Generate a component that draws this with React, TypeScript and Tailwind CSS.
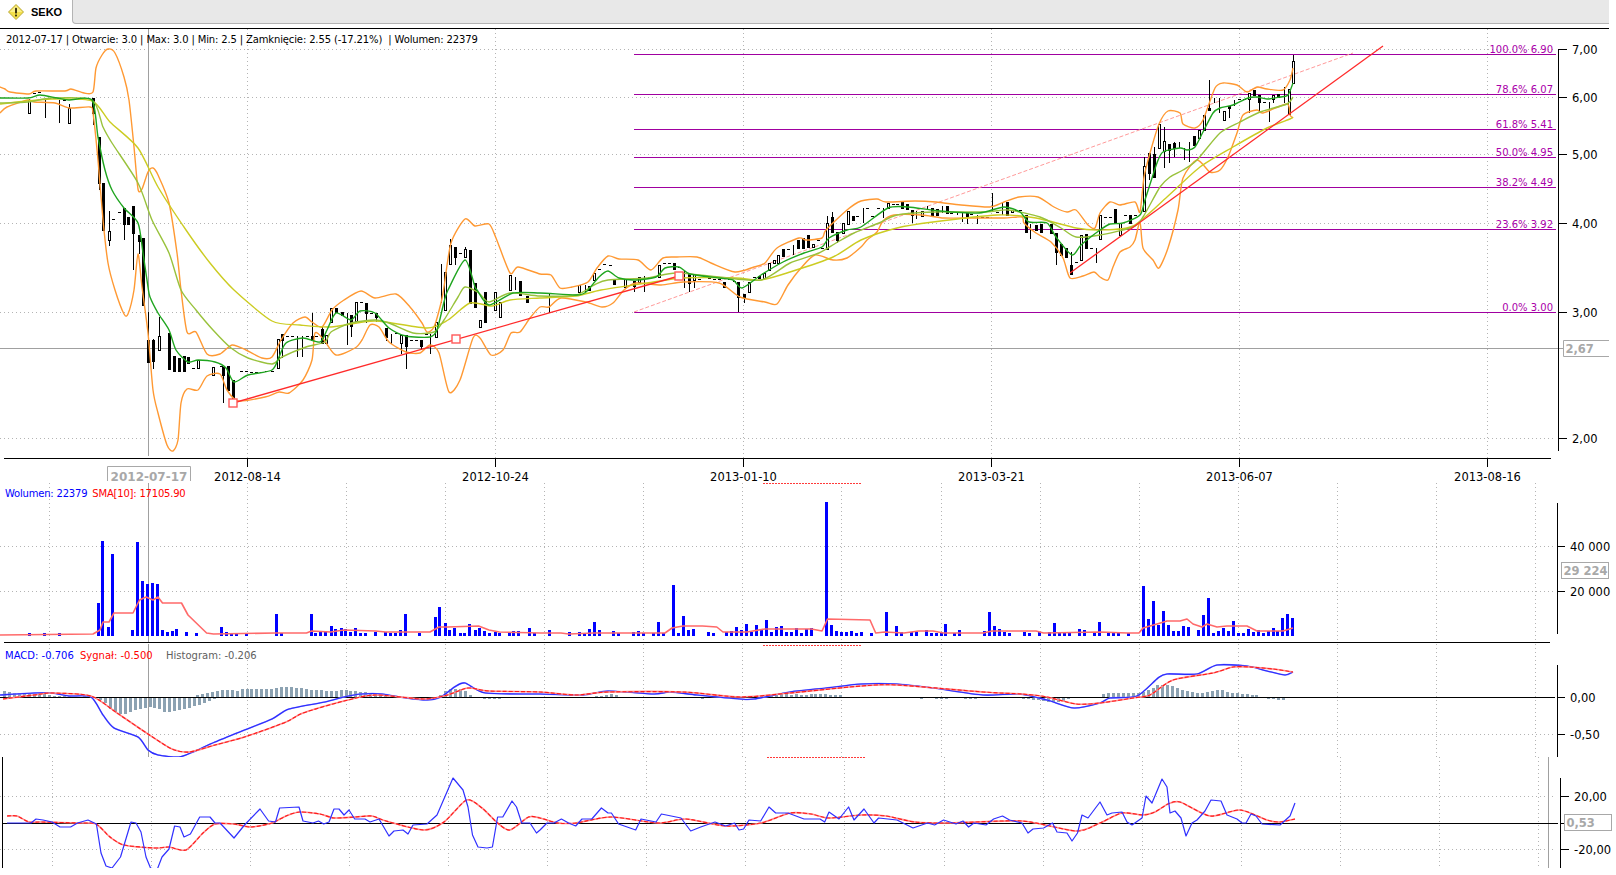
const upperBand = "0,87 5,89 10,92 29,94 36,91 65,91 71,89 84,93 93,92 96,68 102,55 108,49 115,53 124,77 129,100 134,147 138,189 142,189 148,172 153,168 158,175 169,203 177,253 181,290 187,332 196,332 207,354 220,354 232,345 246,350 262,358 272,357 281,340 293,323 305,317 312,322 322,327 332,310 344,300 361,291 375,298 396,294 410,307 422,323 427,332 434,327 441,303 444,287 451,243 465,219 475,226 489,224 496,238 510,273 518,267 540,274 551,275 560,288 572,287 588,282 597,268 608,256 619,259 638,260 651,270 663,258 677,257 697,257 711,263 735,272 754,267 765,263 777,248 799,238 806,240 822,238 826,230 847,210 861,201 877,199 886,202 915,201 936,202 961,205 990,207 1004,202 1019,197 1038,197 1054,207 1067,212 1076,210 1088,225 1095,228 1100,213 1110,202 1120,205 1135,202 1140,212 1144,177 1150,153 1159,124 1168,111 1180,113 1183,124 1195,128 1203,120 1215,88 1223,83 1237,85 1247,92 1257,87 1267,89 1283,90 1290,80 1293,68";
const lowerBand = "0,113 7,107 28,100 34,102 55,103 69,108 90,107 93,113 98,160 103,220 108,263 115,290 124,314 128,314 134,290 138,254 142,287 148,333 153,390 158,413 167,445 173,451 178,440 181,403 187,389 198,390 207,376 220,374 227,390 238,401 265,397 279,392 289,393 303,380 312,360 315,333 324,340 336,355 355,348 362,340 370,325 379,327 389,342 406,352 420,353 430,345 439,353 449,392 460,380 473,338 480,338 491,355 503,350 511,333 520,332 530,318 540,307 549,307 561,298 586,302 602,307 613,303 624,290 636,283 661,285 683,282 719,283 740,297 765,302 777,304 788,285 801,268 815,255 833,260 847,258 861,247 867,240 877,232 883,221 894,215 922,215 944,218 976,218 1004,218 1022,217 1024,223 1036,233 1051,242 1063,258 1070,278 1083,276 1094,272 1100,277 1108,280 1113,267 1120,252 1130,247 1135,240 1140,222 1143,248 1153,260 1159,268 1168,248 1178,210 1183,178 1197,160 1210,172 1220,170 1228,157 1237,133 1243,115 1257,110 1263,113 1287,104 1290,115 1293,118";
const fastMa = "0,98 28,98 40,95 57,98 69,100 92,100 98,137 105,170 112,190 124,208 138,223 143,253 148,287 150,297 158,313 169,330 176,350 188,362 198,360 215,362 226,368 234,382 248,375 272,370 279,357 286,343 303,338 320,342 327,330 336,313 351,320 360,311 375,313 389,328 406,336 430,337 437,330 444,302 448,290 465,260 475,287 477,290 489,305 513,293 540,293 576,295 586,292 599,277 608,271 619,278 636,280 656,277 665,268 679,267 690,274 719,278 733,280 742,288 761,275 783,262 804,253 822,247 829,238 847,230 861,227 888,208 908,207 940,211 979,213 1004,207 1020,212 1029,222 1047,223 1056,237 1072,255 1081,245 1100,230 1110,224 1123,223 1140,215 1145,200 1157,163 1163,152 1180,148 1187,150 1195,147 1203,132 1213,113 1220,108 1233,105 1248,98 1257,97 1267,99 1280,97 1288,95 1293,83";
const midMa = "0,103 28,102 52,98 92,100 103,127 112,143 138,183 152,220 169,253 181,290 196,310 213,330 231,348 248,358 272,364 282,357 306,347 325,342 331,332 351,323 375,320 389,323 413,333 434,332 444,320 458,297 465,287 479,293 489,302 510,293 540,296 576,295 594,285 608,280 647,278 676,273 719,277 761,280 790,263 819,253 836,243 854,233 879,223 897,215 933,212 986,212 1008,210 1040,217 1061,228 1076,237 1100,235 1133,227 1143,217 1160,187 1170,177 1183,170 1197,160 1220,133 1240,122 1260,112 1287,104 1293,97";
const slowMa = "0,104 17,102 52,99 92,101 110,122 138,148 158,187 186,230 210,263 234,290 272,321 300,325 331,327 375,321 427,328 448,320 470,303 492,306 510,300 540,298 576,296 601,290 647,283 683,278 736,278 761,280 790,272 833,257 861,240 897,228 933,222 997,215 1036,218 1076,228 1100,230 1133,226 1167,197 1200,167 1233,147 1267,128 1290,119 1293,117";

// x, top, bottom, filled (1) or hollow (0)
const bodies: [number, number, number, number][] = [
  [29, 100, 113, 0], [68.5, 108, 123, 0], [93, 98, 113, 1], [98.5, 137, 183, 1], [103, 183, 230, 1], [108.5, 231, 240, 0],
  [123.5, 208, 224, 1], [128, 217, 224, 1], [133, 206, 233, 1], [138.5, 235, 241, 1], [143, 238, 305, 1], [148, 340, 362, 1],
  [153, 340, 361, 1], [158.5, 336, 350, 0], [168.5, 333, 369, 1], [174, 356, 371, 1], [179, 358, 371, 1], [183.5, 356, 371, 1],
  [188, 357, 363, 1], [197.5, 360, 368, 0], [212.5, 367, 375, 0], [222.5, 367, 375, 1], [228, 366, 390, 1], [233, 380, 399, 1],
  [277.5, 339, 368, 0], [282, 334, 340, 1], [311.5, 336, 340, 1], [321.5, 329, 343, 1], [326, 335, 343, 0], [331, 308, 322, 0],
  [336, 308, 312, 1], [341.5, 312, 315, 1], [351, 315, 326, 1], [356, 302, 321, 0], [366, 303, 313, 1], [376, 313, 317, 1],
  [386, 328, 337, 1], [400.5, 335, 343, 0], [406, 335, 346, 1], [421, 340, 346, 1], [435.5, 322, 337, 0], [445, 272, 310, 0],
  [450, 245, 264, 0], [455, 247, 257, 1], [465, 249, 257, 0], [470, 250, 303, 1], [475, 283, 307, 1], [480, 320, 327, 0],
  [485, 292, 322, 1], [495, 292, 310, 0], [500, 302, 317, 0], [510, 275, 290, 0], [520, 281, 295, 1], [527, 296, 302, 1],
  [579, 285, 292, 0], [589, 286, 290, 1], [594, 273, 280, 0], [614, 280, 284, 1], [625, 279, 287, 0], [634, 281, 286, 1],
  [639, 277, 282, 0], [659, 265, 277, 0], [674, 263, 269, 1], [689, 274, 283, 1], [694, 274, 280, 0], [724, 282, 287, 1],
  [738, 282, 297, 1], [743.5, 294, 297, 1], [749, 282, 292, 0], [759, 276, 278, 1], [763.5, 273, 278, 0], [768.5, 263, 270, 0],
  [773.5, 260, 263, 0], [778, 255, 263, 0], [783, 249, 256, 1], [798, 240, 248, 1], [802.5, 238, 248, 1], [808, 235, 247, 1],
  [813, 244, 247, 0], [827, 223, 249, 0], [832, 217, 232, 1], [837, 232, 240, 1], [842.5, 223, 233, 0], [847.5, 211, 224, 0],
  [852.5, 216, 220, 1], [887.5, 203, 208, 0], [902, 202, 208, 1], [907, 204, 209, 1], [911.5, 210, 215, 1], [921.5, 211, 216, 0],
  [931.5, 208, 215, 1], [936.5, 209, 215, 1], [946.5, 206, 213, 1], [966.5, 213, 216, 1], [1006.5, 202, 215, 1], [1011.5, 210, 212, 0],
  [1025.7, 215, 232, 1], [1036, 225, 230, 1], [1041, 224, 232, 1], [1051, 224, 233, 1], [1055.5, 233, 252, 1], [1060.5, 244, 255, 1],
  [1065.5, 248, 257, 1], [1070.7, 265, 274, 1], [1080.7, 235, 260, 0], [1085.7, 234, 248, 1], [1100, 215, 239, 0], [1115, 209, 223, 1],
  [1120, 223, 235, 0], [1130, 215, 223, 1], [1144, 166, 211, 0], [1149, 153, 173, 1], [1154, 154, 177, 1], [1159, 124, 148, 0],
  [1164, 141, 151, 0], [1169, 144, 150, 1], [1174, 143, 148, 1], [1194, 136, 145, 1], [1199, 130, 138, 0], [1204, 115, 130, 0],
  [1209, 108, 110, 1], [1224, 111, 120, 0], [1229, 106, 108, 1], [1249, 93, 99, 0], [1254, 90, 95, 1], [1259, 95, 102, 1],
  [1273, 95, 99, 0], [1278, 94, 97, 1], [1289, 89, 114, 0], [1293, 61, 83, 0],
];
const wicks: [number, number, number][] = [
  [29, 99, 113], [44.5, 98, 118], [59, 100, 123], [68.5, 104, 123], [93, 98, 125], [98.5, 137, 190], [103, 183, 230], [108.5, 211, 246],
  [123.5, 208, 240], [133, 206, 270], [138.5, 235, 254], [148, 312, 363], [153, 339, 369], [158.5, 317, 350], [222.5, 367, 403],
  [282, 334, 358], [297, 336, 357], [302, 336, 357], [311.5, 313, 340], [321.5, 327, 343], [346.5, 313, 345], [351, 315, 337],
  [366, 303, 323], [376, 313, 322], [386, 328, 341], [391, 334, 344], [400.5, 335, 354], [406, 335, 369], [421, 340, 350], [430, 334, 354],
  [441, 264, 303], [450, 239, 264], [455, 247, 265], [465, 247, 257], [515, 277, 290], [549, 293, 313], [585, 285, 292], [634, 281, 292],
  [644, 276, 292], [684, 270, 288], [689, 274, 292], [694, 274, 288], [738, 282, 312], [743.5, 294, 303], [793, 245, 255], [827, 216, 249],
  [832, 212, 232], [837, 232, 243], [847.5, 211, 224], [862.5, 208, 223], [882.5, 208, 218], [911.5, 210, 223], [916, 211, 219],
  [926.5, 206, 210], [941.5, 206, 213], [956.5, 212, 215], [961.5, 212, 222], [966.5, 213, 224], [976.5, 215, 224], [991.5, 193, 212],
  [1001.5, 202, 215], [1030, 224, 239], [1041, 224, 232], [1055.5, 233, 265], [1070.7, 252, 274], [1095.7, 248, 263], [1144, 157, 211],
  [1149, 153, 180], [1154, 147, 177], [1164, 127, 168], [1169, 144, 163], [1174, 142, 157], [1179, 142, 148], [1184, 148, 160],
  [1189, 142, 162], [1209, 80, 110], [1214, 98, 103], [1219, 98, 113], [1229, 106, 118], [1234, 100, 106], [1249, 93, 113], [1254, 90, 95],
  [1259, 95, 113], [1269, 102, 122], [1273, 95, 103], [1284, 87, 103], [1289, 89, 115], [1293, 55, 83],
];
const dashes: [number, number][] = [
  [34, 93], [39, 92], [49, 98], [54, 98], [64, 100], [74, 99], [79, 98], [84, 99], [113, 219], [118.5, 212], [193, 368], [205, 360], [221, 366],
  [241, 371], [246, 371], [251, 372], [256, 372], [261, 372], [266, 371], [272, 371], [287, 336], [292, 336], [307, 336], [316, 336], [361, 302], [371, 313],
  [396, 333], [411, 340], [416, 340], [426, 334], [460, 253], [599, 269], [604, 264], [610, 265], [619, 279], [629, 279], [649, 277], [654, 277],
  [664, 263], [669, 263], [679, 267], [699, 279], [704, 277], [709, 278], [714, 279], [719, 279], [729, 279], [734, 281], [754, 277], [788, 249],
  [818, 240], [822, 248], [857, 216], [867, 208], [872, 216], [877.5, 208], [892.5, 204], [897, 204], [951, 213], [971, 214], [981.5, 217], [986.5, 217],
  [996.5, 212], [1016, 210], [1020, 210], [1076, 262], [1090.7, 248], [1105, 217], [1110, 217], [1125, 215], [1135, 215], [1239, 99], [1244, 99], [1264, 102],
];

// x, top of bar
const volume: [number, number][] = [
  [28.6, 633], [44, 633], [58.5, 633], [97.5, 603], [102, 541], [107.5, 627], [112, 554], [132, 630], [137.4, 542], [142, 581], [147.4, 584], [152, 583], [157, 584],
  [162, 630], [167, 632], [171.5, 631], [176.3, 629], [186, 632], [196, 633], [221.4, 627], [226, 632], [231, 633], [236, 633], [246, 633], [276, 614], [281, 633],
  [310.6, 614], [315.4, 633], [320, 632], [325.4, 632], [330.6, 626], [335.4, 629], [340.6, 628], [345.4, 629], [350, 632], [355.4, 628], [360, 633], [365, 633],
  [375.4, 632], [385, 632], [390, 633], [395, 633], [399.5, 630], [404.6, 614], [419.4, 633], [434.6, 617], [439.4, 607], [444.6, 623], [449.4, 630], [454, 628],
  [459.7, 633], [464, 633], [469.4, 624], [474.5, 630], [479.3, 628], [484, 631], [489.3, 633], [494.5, 632], [499.3, 633], [508.6, 632], [513.4, 631], [518.3, 631],
  [528.6, 628], [533.8, 633], [548.6, 630], [568.6, 632], [578.6, 632], [583.6, 633], [588.6, 629], [593.6, 622], [598.6, 630], [612.5, 631], [617.5, 633], [632.5, 632],
  [637.5, 631], [642.5, 633], [652.5, 633], [657.5, 622], [662.5, 633], [672.5, 585], [677.5, 633], [682.5, 616], [687.5, 630], [692.5, 629], [707.5, 632], [712.5, 633],
  [726.4, 632], [731.4, 631], [736.4, 627], [741.4, 630], [746.4, 624], [751.4, 632], [756.4, 625], [761.4, 630], [766.4, 620], [771.4, 632], [776.4, 627], [781.4, 626],
  [786.4, 632], [791.4, 632], [796.4, 628], [801.4, 633], [806.4, 629], [811.4, 628], [826.4, 502], [831.4, 625], [836, 631], [841, 632], [846, 632], [850.7, 631],
  [855.7, 633], [860.7, 632], [870.7, 633], [885.7, 612], [895.7, 626], [900.7, 632], [910.7, 632], [915.7, 632], [925.7, 630], [930.7, 633], [935.7, 633], [940.7, 633],
  [944.6, 624], [954.3, 633], [959.3, 630], [984.3, 631], [989.3, 612], [994.3, 626], [999.3, 629], [1004.3, 632], [1009.3, 633], [1024.3, 632], [1029.3, 633], [1039.3, 632],
  [1049.3, 632], [1053.6, 623], [1058.6, 632], [1063.6, 633], [1068.6, 632], [1078.6, 629], [1083.6, 630], [1093.6, 633], [1098.6, 622], [1108, 633], [1113, 633], [1118, 633],
  [1128, 633], [1143, 586], [1148, 619], [1153, 601], [1158, 625], [1163, 611], [1168, 625], [1173, 631], [1178, 631], [1183, 626], [1188, 627], [1198, 630], [1203, 615],
  [1208, 598], [1213, 633], [1218, 631], [1223, 628], [1228, 631], [1233, 621], [1238, 633], [1243, 633], [1248, 629], [1253, 632], [1258, 630], [1263, 633], [1268, 631],
  [1273, 628], [1277, 631], [1282, 618], [1287, 614], [1292, 618],
];
const sma = "0,635 93,634 100,630 103,622 109,622 114,613 133,613 139.5,600 146,597 153,600 158,597 162.5,603 181.5,603 188,615 206.6,633 213.5,634 275.5,633 306.5,633 311.6,631 330.6,632 344,630 375.4,631 385.7,632 430,632 439,627 447.7,627 478.6,626 489,630 499.3,632 540,633 561,633 568.6,634 593.6,633 665,633 672,628 683,626 702.5,626 716.8,627 723,632 747,632 765,629 811.4,629 822,631 827.5,619 870,620 875.7,633 884.6,632 904,633 918.6,631 933,631 943.6,633 983,633 992,631 1036,631 1043.6,633 1100,632 1127,633 1139,633 1143,628 1157,624 1167,621 1180,621 1187,619 1193,624 1202,627 1207,624 1217,627 1227,626 1247,626 1257,631 1283,631 1293,628";

// start x, bar heights above (+) or below (-) the zero line, one bar every 4.95px
const histogram: [number, number[]][] = [
  [3.4, [6, 5, 4, 4, 4, 3, 3, 4, 3, 2, 1, 1, 1, 1, -1, -1, 1]],
  [99, [-3, -6, -12, -15, -17, -17, -15, -13, -12, -11, -10, -11, -12, -15, -15, -14, -13, -12, -11, -9, -8, -6, -4, -2]],
  [196, [2, 3, 4, 5, 6, 7, 7, 7, 6, 8, 8, 8, 8, 8, 8, 8, 9, 10, 10, 10, 9, 9, 8, 7, 7, 7, 6, 6, 6, 7, 7, 6, 6, 5, 5, 4, 4, 2, 1]],
  [398, [-1, -1, -1, -1, -1, -1, -1]],
  [439, [2, 6, 8, 8, 8, 6, 2]],
  [483, [-2, -2, -2, -2, -1, 0, 0, 0, 0, 0, -1, -1]],
  [595, [1, 1, 2, 3, 2]],
  [696, [-1, -2, -1, -1, -1, -1, -1]],
  [760, [1, 1, 2, 2, 3, 3, 2, 3, 2, 2, 3, 3, 3, 3, 2, 2, 2]],
  [910, [-1, -1, -2, -1, -1, -2, -2, -2, -1, -1, -1, -2, -2, -2, -1, -1]],
  [1022, [-2, -2, -3, -3, -4, -5, -5, -5, -4, -2]],
  [1102, [3, 4, 4, 4, 4, 4, 4, 4, 5, 7, 9, 12, 12, 12, 11, 9, 7, 6, 5, 4, 4, 5, 6, 7, 7, 5, 4, 4, 3, 3, 2, 2]],
  [1262, [-1, -2, -2, -3, -3, -1]],
];
const macd = "0,695 34,693 52,693 69,696 91,697 103,715 114,728 138,737 148,750 158,755 179,757 193,752 215,742 244.5,730 272,719 289,709 325,702 344,697 361.6,694 382,694 406,698 427,700 441,697 454.5,687 465,683 485.5,693 540,694 583,695 608,691 654,694 670,692 697,695 740,699 754,699 790,692 826,688 861,684 897,684 933,688 983,695 1018.6,694 1047,700 1074,708 1100,703 1110,698 1137,696 1158,678 1167,674 1197,674 1217,665 1247,666 1267,671 1285,675 1293,672";
const signal = "3,699 34,695 52,693 91,696 117,713 148,734 172,749 189.4,752 215,745 244.5,737 286,722 303,713 344,701 375,695 423.5,699 447.6,695 468,688 489,691 540,692 576,695 608,692 683,692 740,697 790,693 861,686 897,685 983,692 1022,694 1047,697 1076,704 1100,703 1133,698 1150,695 1173,680 1213,673 1233,667 1250,667 1273,669 1293,672";
const osc = "7,823 31,823 36,819 43,820 52,822 60,827 70.6,827 77.5,823 88,820 96.4,824 101,853 106,866 112,868 120.5,857 131,822 136,823 141,832 146,857 150.5,868 157,870 162,857 169,849 174.6,826 180,827 184,837 190.4,834 199.7,817 210,817 215,823 220,823 234,838 244.5,825 260,809 268.6,821 275.5,822 279.6,808 299,807 303,821 313,823 318.5,821 323.7,824 329,822 334,809 339,809 344,815 349,810 354.7,819 365,819 370,822 379,819 389,836 394,831 403,830 408,834 413,825 427,824 437,815 453,778 463,790 468,807 472.5,835 478,847 487,848 492.4,847 497.6,817 502.8,817 512,801 516.5,807 521.7,823 530,823 536.5,833 540,830 547,823 554,823 561.4,819 568.6,823 575.7,826 582,819 591.8,819 601.4,808 608,813 611.4,813 618.6,824 635.7,830 641,819 656,822 661.4,814 681,818 690.7,831 700.7,827 715,822 725.7,826 734.6,823 739,830 743.6,829 749,820 760.7,821 769,807 775.7,813 788,813 804,819 820,819 824.7,822 829,812 839,819 848.6,807 854,820 864,809 874,823 878.6,818 897,820 913,828 927.5,823 934.6,825 943.6,820 956,824 963,821 968.6,827 974,823 986,825 993.6,819 1002.5,816 1009.6,820 1022,823 1028,833 1033,829 1043.6,828 1052.5,823 1057,832 1067,833 1072,841 1077.5,833 1082,815 1088,818 1100,802 1107,815 1112,813 1122,812 1127,822 1132,825 1142,818 1146,796 1152,803 1162,779 1167,787 1170,813 1175,811 1181,818 1186,836 1192,823 1197,820 1205,811 1211,800 1221,801 1227,815 1237,819 1242,823 1246,823 1251,814 1256,816 1262,824 1280,825 1290,816 1295,803";
const oscSignal = "7,816 17,816 29,822 41,822 79,823 96,824 110,837 124,845 155,848 169,847 186,850 203,833 215,824 234,824 251,827 272,823 286,816 299.6,812 320,814 334,818 355,817 372,816 386,821 423.6,830 444,822 466.6,800 482,808 497.6,823 510,830 528.6,817 540,818 558,823 576,823 611,817 658,823 686,819 725.7,826 761,823 790,813 811,814 829,818 861,815 886,816 915,822 951,823 1022,821 1076,831 1100,823 1122,813 1143,815 1155,812 1168,804 1180,802 1210,816 1240,810 1267,820 1280,822 1295,819";

const priceLabels: [string, number][] = [["7,00", 49.5], ["6,00", 97.5], ["5,00", 154.5], ["4,00", 223.5], ["3,00", 312.5], ["2,00", 438.5]];
const dateTicks: [string, number][] = [["2012-08-14", 247.5], ["2012-10-24", 495.5], ["2013-01-10", 743.5], ["2013-03-21", 991.5], ["2013-06-07", 1239.5], ["2013-08-16", 1487.5]];
const fibLevels: [string, number][] = [["100.0% 6.90", 54.5], ["78.6% 6.07", 94.5], ["61.8% 5.41", 129.5], ["50.0% 4.95", 157.5], ["38.2% 4.49", 187.5], ["23.6% 3.92", 229.5], ["0.0% 3.00", 312.5]];
const gridX = [49.5, 148.5, 247.5, 346.5, 445.5, 544.5, 643.5, 742.5, 841.5, 941.5, 1040.5, 1139.5, 1238.5, 1337.5, 1436.5, 1535.5];
const oscGridX = [52.5, 151.5, 250.5, 349.5, 448.5, 547.5, 646.5, 745.5, 844.5, 944.5, 1043.5, 1142.5, 1241.5, 1340.5, 1439.5, 1538.5];

const DOT = "#b4b4b4";

// catmull-rom through the read-off points, the chart lines are rounded in the picture
function smooth(points: string) {
  const p = points.split(" ").map((s) => s.split(",").map(Number));
  let d = `M${p[0][0]} ${p[0][1]}`;
  for (let i = 0; i < p.length - 1; i++) {
    const a = p[Math.max(i - 1, 0)];
    const b = p[i];
    const c = p[i + 1];
    const e = p[Math.min(i + 2, p.length - 1)];
    const k = 8;
    d += ` C${b[0] + (c[0] - a[0]) / k} ${b[1] + (c[1] - a[1]) / k} ${c[0] - (e[0] - b[0]) / k} ${c[1] - (e[1] - b[1]) / k} ${c[0]} ${c[1]}`;
  }
  return d;
}

function Dotted({ x1, y1, x2, y2 }: { x1: number; y1: number; x2: number; y2: number }) {
  return <line x1={x1} y1={y1} x2={x2} y2={y2} stroke={DOT} strokeDasharray="1 3" />;
}

function Curve({ points, color, width = 1.4, dash }: { points: string; color: string; width?: number; dash?: string }) {
  return <path d={smooth(points)} fill="none" stroke={color} strokeWidth={width} strokeDasharray={dash} />;
}

function Tick({ x, y, label, size = 9 }: { x: number; y: number; label: string; size?: number }) {
  return (
    <>
      <line x1={x} y1={y} x2={x + size} y2={y} stroke="#000" />
      <text x={x + size + 5} y={y + 4} fontSize="11.5" fill="#000">{label}</text>
    </>
  );
}

function ValueBox({ x, y, w, h, label }: { x: number; y: number; w: number; h: number; label: string }) {
  return (
    <>
      <rect x={x} y={y} width={w} height={h} fill="#fff" stroke="#a8a8a8" />
      <text x={x + 2} y={y + h / 2 + 4} fontSize="11.5" fontWeight="bold" fill="#a8a8a8">{label}</text>
    </>
  );
}

function Square({ x, y }: { x: number; y: number }) {
  return <rect x={x - 4} y={y - 4} width="8" height="8" fill="#fff" stroke="#ff5a5a" strokeWidth="1.4" />;
}

function PriceChart() {
  return (
    <svg viewBox="0 29 1616 454" className="block h-full w-full overflow-visible">
      {priceLabels.map(([label, y]) => <Dotted key={label} x1={0} y1={y} x2={1556} y2={y} />)}
      {dateTicks.map(([, x]) => <Dotted key={x} x1={x} y1={29} x2={x} y2={458} />)}

      <line x1={148.5} y1={29} x2={148.5} y2={456} stroke="#a0a0a0" />
      <line x1={0} y1={348.5} x2={1571} y2={348.5} stroke="#a0a0a0" />

      {fibLevels.map(([label, y]) => (
        <g key={label}>
          <line x1={634} y1={y} x2={1556} y2={y} stroke="#a000a0" />
          <text x={1553} y={y - 2} textAnchor="end" fontSize="10" fill="#aa00aa">{label}</text>
        </g>
      ))}

      <line x1={634} y1={312} x2={1353} y2={53} stroke="#ff9a9a" strokeDasharray="4 2" />

      <g shapeRendering="crispEdges">
        {wicks.map(([x, y1, y2], i) => <line key={i} x1={Math.round(x) + 0.5} y1={y1} x2={Math.round(x) + 0.5} y2={y2} stroke="#000" />)}
        {dashes.map(([x, y], i) => <line key={i} x1={Math.round(x) - 1} y1={y + 0.5} x2={Math.round(x) + 2} y2={y + 0.5} stroke="#000" />)}
        {bodies.map(([x, y1, y2, filled], i) => (
          <rect key={i} x={Math.round(x) - 0.5} y={y1 + 0.5} width="2" height={y2 - y1} fill={filled ? "#000" : "#fff"} stroke="#000" />
        ))}
      </g>

      <Curve points={upperBand} color="#ff9933" />
      <Curve points={lowerBand} color="#ff9933" />
      <Curve points={slowMa} color="#cccc22" />
      <Curve points={midMa} color="#99c23c" />
      <Curve points={fastMa} color="#1fa51f" />

      <line x1={233} y1={403} x2={679} y2={276} stroke="#ff2a2a" strokeWidth="1.3" />
      <line x1={1070} y1={273} x2={1383} y2={46} stroke="#ff2a2a" strokeWidth="1.3" />
      <Square x={233} y={403} />
      <Square x={456} y={339} />
      <Square x={679} y={276} />

      <line x1={4} y1={458.5} x2={1551} y2={458.5} stroke="#000" />
      {dateTicks.map(([label, x]) => (
        <g key={label}>
          <line x1={x} y1={458} x2={x} y2={467} stroke="#000" />
          <text x={x} y={481} textAnchor="middle" fontSize="11.5" fill="#000">{label}</text>
        </g>
      ))}

      <path d="M107.5 481 V466.5 H190.5 V481" fill="#fff" stroke="#a8a8a8" />
      <text x={149} y={481} textAnchor="middle" fontSize="12" fontWeight="bold" fill="#a8a8a8">2012-07-17</text>

      <line x1={1558.5} y1={49} x2={1558.5} y2={451} stroke="#000" />
      {priceLabels.map(([label, y]) => <Tick key={label} x={1558} y={y} label={label} />)}
      <path d="M1609 340.5 H1563.5 V356.5 H1609" fill="#fff" stroke="#a8a8a8" />
      <text x={1565.5} y={352.5} fontSize="11.5" fontWeight="bold" fill="#a8a8a8">2,67</text>
    </svg>
  );
}

function VolumeChart() {
  return (
    <svg viewBox="0 483 1616 161" className="block h-full w-full">
      {[546.5, 591.5].map((y) => <Dotted key={y} x1={0} y1={y} x2={1556} y2={y} />)}
      {gridX.map((x) => <Dotted key={x} x1={x} y1={483} x2={x} y2={642} />)}
      <line x1={148.5} y1={483} x2={148.5} y2={642} stroke="#a0a0a0" />
      <line x1={763} y1={483.5} x2={862} y2={483.5} stroke="#ff3a3a" strokeDasharray="2 1" />
      <g shapeRendering="crispEdges">
        {volume.map(([x, y]) => <rect key={x} x={Math.round(x) - 1} y={y} width="3" height={636 - y} fill="#0000ff" />)}
      </g>
      <polyline points={sma} fill="none" stroke="#ff6a6a" strokeWidth="1.6" strokeLinejoin="round" />
      <line x1={4} y1={642.5} x2={1550} y2={642.5} stroke="#000" />
      <line x1={1557.5} y1={503} x2={1557.5} y2={634} stroke="#000" />
      <Tick x={1557} y={546.5} label="40 000" size={8} />
      <Tick x={1557} y={591.5} label="20 000" size={8} />
      <ValueBox x={1561.5} y={562.5} w={47} h={16} label="29 224" />
    </svg>
  );
}

function MacdChart() {
  return (
    <svg viewBox="0 644 1616 113" className="block h-full w-full">
      <Dotted x1={0} y1={734.5} x2={1556} y2={734.5} />
      {gridX.map((x) => <Dotted key={x} x1={x} y1={644} x2={x} y2={757} />)}
      <line x1={148.5} y1={644} x2={148.5} y2={757} stroke="#a0a0a0" />
      <line x1={763} y1={645.5} x2={862} y2={645.5} stroke="#ff3a3a" strokeDasharray="2 1" />
      <g shapeRendering="crispEdges">
        {histogram.map(([start, bars]) =>
          bars.map((h, i) => (
            <rect key={`${start}-${i}`} x={Math.round(start + i * 4.95)} y={h > 0 ? 697 - h : 697} width="3" height={Math.abs(h)} fill="#8ca2b2" />
          ))
        )}
      </g>
      <line x1={0} y1={697.5} x2={1555} y2={697.5} stroke="#000" />
      <Curve points={macd} color="#8a8aff" width={1.6} />
      <Curve points={macd} color="#2a2aff" width={1.1} />
      <Curve points={signal} color="#ff8a8a" width={1.6} />
      <Curve points={signal} color="#ff1a1a" width={1.1} dash="4 2" />
      <line x1={1557.5} y1={665} x2={1557.5} y2={757} stroke="#000" />
      <Tick x={1557} y={697.5} label="0,00" size={8} />
      <Tick x={1557} y={734.5} label="-0,50" size={8} />
    </svg>
  );
}

function OscillatorChart() {
  return (
    <svg viewBox="0 757 1616 111" className="block h-full w-full">
      {[796.5, 849.5].map((y) => <Dotted key={y} x1={0} y1={y} x2={1556} y2={y} />)}
      {oscGridX.map((x) => <Dotted key={x} x1={x} y1={757} x2={x} y2={868} />)}
      <line x1={767} y1={757.5} x2={865} y2={757.5} stroke="#ff3a3a" strokeDasharray="2 1" />
      <line x1={2.5} y1={757} x2={2.5} y2={868} stroke="#000" />
      <line x1={1548.5} y1={757} x2={1548.5} y2={868} stroke="#a0a0a0" />
      <line x1={2} y1={823.5} x2={1558} y2={823.5} stroke="#000" />
      <Curve points={oscSignal} color="#ff8a8a" width={1.6} />
      <Curve points={oscSignal} color="#ff1a1a" width={1.1} dash="4 2" />
      <polyline points={osc} fill="none" stroke="#3030ff" strokeWidth="1.2" strokeLinejoin="round" />
      <line x1={1560.5} y1={778} x2={1560.5} y2={868} stroke="#000" />
      <Tick x={1560} y={796.5} label="20,00" size={9} />
      <line x1={1560} y1={823.5} x2={1564} y2={823.5} stroke="#000" />
      <Tick x={1560} y={849.5} label="-20,00" size={9} />
      <ValueBox x={1564.5} y={814.5} w={47} h={16} label="0,53" />
    </svg>
  );
}

function TabIcon() {
  return (
    <svg width="18" height="18" viewBox="0 0 18 18">
      <path d="M9 1.5 16.5 9 9 16.5 1.5 9Z" fill="#f4e04a" stroke="#b9a93a" strokeLinejoin="round" />
      <path d="M9 2.8 15.2 9H2.8Z" fill="#fbf08c" />
      <rect x="8" y="4.8" width="2" height="5.6" rx="0.6" fill="#3c3410" />
      <rect x="8" y="11.4" width="2" height="2" rx="0.6" fill="#3c3410" />
    </svg>
  );
}

function VolumeLegend() {
  return (
    <p className="absolute left-[5px] top-[3px] z-10 flex gap-[5px] text-[10px] leading-[15px] tracking-[-0.2px] whitespace-pre">
      <span className="text-[#0000ff]">Wolumen: 22379</span>
      <span className="text-[#ff0000]">SMA[10]: 17105.90</span>
    </p>
  );
}

function MacdLegend() {
  return (
    <p className="absolute left-[5px] top-[4px] z-10 flex text-[10px] leading-[15px] whitespace-pre">
      <span className="w-[75px] text-[#0000ff]">MACD: -0.706</span>
      <span className="w-[86px] text-[#ff0000]">Sygnał: -0.500</span>
      <span className="text-[#606060]">Histogram: -0.206</span>
    </p>
  );
}

export default function App() {
  return (
    <div className="flex h-[875px] w-[1616px] flex-col overflow-hidden bg-white [font-family:'DejaVu_Sans',sans-serif]">
      <div className="flex h-[29px] w-[1609px] shrink-0 border-b border-black bg-white">
        <div className="flex w-[72px] items-center gap-1.5 pb-1 pl-[7px]">
          <TabIcon />
          <span className="text-[11px] font-bold text-black [font-family:'Liberation_Sans',sans-serif]">SEKO</span>
        </div>
        <div className="h-[24px] flex-1 rounded-bl-sm border-b border-l border-[#b4b4b4] bg-[#e8e8e8]" />
      </div>

      <div className="relative h-[454px] shrink-0">
        <p className="absolute left-[6px] top-[3px] text-[10px] leading-[15px] tracking-[-0.14px] whitespace-pre text-black">
          2012-07-17 | Otwarcie: 3.0 | Max: 3.0 | Min: 2.5 | Zamknięcie: 2.55 (-17.21%)  | Wolumen: 22379
        </p>
        <PriceChart />
      </div>

      <div className="relative h-[161px] shrink-0">
        <VolumeLegend />
        <VolumeChart />
      </div>

      <div className="relative h-[113px] shrink-0">
        <MacdLegend />
        <MacdChart />
      </div>

      <div className="h-[111px] shrink-0">
        <OscillatorChart />
      </div>
    </div>
  );
}
